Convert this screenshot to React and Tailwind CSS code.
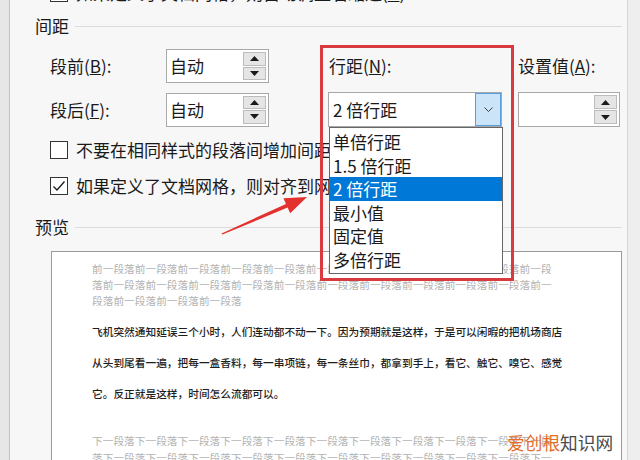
import React from 'react';

const grayTop = [
    '前一段落前一段落前一段落前一段落前一段落前一段落前一段落前一段落前一段落前一段落前一段',
    '落前一段落前一段落前一段落前一段落前一段落前一段落前一段落前一段落前一段落前一段落前一',
    '段落前一段落前一段落前一段落',
];

const body = [
    '飞机突然通知延误三个小时，人们连动都不动一下。因为预期就是这样，于是可以闲暇的把机场商店',
    '从头到尾看一遍，把每一盒香料，每一串项链，每一条丝巾，都拿到手上，看它、触它、嗅它、感觉',
    '它。反正就是这样，时间怎么流都可以。',
];

const grayBottom = [
    '下一段落下一段落下一段落下一段落下一段落下一段落下一段落下一段落下一段落下一段落下一段',
    '落下一段落下一段落下一段落下一段落下一段落下一段落下一段落下一段落下一段落下一段落下一',
];

const options = ['单倍行距', '1.5 倍行距', '2 倍行距', '最小值', '固定值', '多倍行距'];

const Triangle = ({ up }) => (
    <svg width="9" height="5" viewBox="0 0 9 5">
        <path d={up ? 'M0 5 L4.5 0 L9 5 Z' : 'M0 0 L4.5 5 L9 0 Z'} fill="#1a1a1a" />
    </svg>
);

const Spin = ({ value, className }) => (
    <div className={`flex items-stretch border border-[#a8a8a8] bg-white ${className}`}>
        <span className="flex-1 pl-[3px] text-[17px] leading-[32px]">{value}</span>
        <div className="my-[2px] mr-[2px] flex w-[23px] flex-col gap-[1px]">
            <div className="flex flex-1 items-center justify-center border border-[#bcbcbc] bg-[#e5e5e5]">
                <Triangle up />
            </div>
            <div className="flex flex-1 items-center justify-center border border-[#bcbcbc] bg-[#e5e5e5]">
                <Triangle />
            </div>
        </div>
    </div>
);

const Checkbox = ({ checked }) => (
    <div className="flex h-[18px] w-[18px] shrink-0 items-center justify-center border border-[#333] bg-white">
        {checked && (
            <svg width="14" height="12" viewBox="0 0 14 12">
                <path d="M1.5 6.5 L5 10 L12.5 1.5" fill="none" stroke="#1a1a1a" strokeWidth="1.3" />
            </svg>
        )}
    </div>
);

const Section = ({ title, className }) => (
    <div className={`flex h-[20px] items-center ${className}`}>
        <span className="text-[17px] leading-[20px]">{title}</span>
        <div className="ml-[6px] h-px flex-1 bg-[#dcdcdc]" />
    </div>
);

export default function App() {
    return (
        <div className="relative flex h-[460px] w-[640px] overflow-hidden bg-[#f7f7f7] font-['Noto_Sans_CJK_SC',sans-serif] text-[#1a1a1a]">
            {/* left window edge */}
            <div className="w-[10px] border-r border-[#c2c2c2] bg-[#e7e7e7]" />

            {/* dialog body */}
            <div className="flex flex-1 flex-col pl-[25px] pr-[5px]">
                {/* cut-off row at the top */}
                <div className="mt-[-17px] flex h-[20px] items-center gap-[8px] pl-[15px] whitespace-nowrap">
                    <Checkbox />
                    <span className="text-[17px]">如果定义了文档网格，则自动调整右缩进(<u>D</u>)</span>
                </div>

                <Section title="间距" className="mt-[13px]" />

                <div className="mt-[13px] flex h-[34px] items-center">
                    <span className="w-[131px] pl-[15px] text-[17px]">段前(<u>B</u>):</span>
                    <Spin value="自动" className="h-[34px] w-[103px]" />
                    <span className="ml-[60px] w-[189px] text-[17px]">行距(<u>N</u>):</span>
                    <span className="text-[17px]">设置值(<u>A</u>):</span>
                </div>

                <div className="mt-[9px] flex h-[35px] items-center">
                    <span className="w-[131px] pl-[15px] text-[17px]">段后(<u>F</u>):</span>
                    <Spin value="自动" className="h-[34px] w-[103px]" />
                    <div className="ml-[59px] flex h-[35px] w-[174px] border border-[#a8a8a8] bg-white">
                        <span className="flex-1 pl-[4px] text-[17px] leading-[33px]">2 倍行距</span>
                        <div className="flex w-[26px] items-center justify-center border border-[#5a9fe0] bg-[#cce4f7]">
                            <svg width="9" height="6" viewBox="0 0 9 6">
                                <path d="M0.5 0.5 L4.5 4.5 L8.5 0.5" fill="none" stroke="#404040" strokeWidth="1" />
                            </svg>
                        </div>
                    </div>
                    <Spin value="" className="ml-[16px] h-[35px] w-[102px]" />
                </div>

                <div className="mt-[14px] flex h-[18px] items-center gap-[8px] pl-[15px] whitespace-nowrap">
                    <Checkbox />
                    <span className="text-[17px]">不要在相同样式的段落间增加间距(<u>C</u>)</span>
                </div>

                <div className="mt-[17px] flex h-[19px] items-center gap-[8px] pl-[15px] whitespace-nowrap">
                    <Checkbox checked />
                    <span className="text-[17px]">如果定义了文档网格，则对齐到网格(<u>W</u>)</span>
                </div>

                <Section title="预览" className="mt-[22px]" />

                {/* preview */}
                <div className="ml-[16px] mt-[14px] flex-1 border border-[#9a9a9a] bg-white pl-[40px] pt-[9px] text-[10.7px] whitespace-nowrap">
                    {grayTop.map((line) => (
                        <div key={line} className="leading-[16px] text-[#b3b3b3]">{line}</div>
                    ))}
                    <div className="mt-[7px]">
                        {body.map((line) => (
                            <div key={line} className="font-medium leading-[31px] text-[#1e1e1e]">{line}</div>
                        ))}
                    </div>
                    <div className="mt-[23px]">
                        {grayBottom.map((line) => (
                            <div key={line} className="leading-[17px] text-[#b3b3b3]">{line}</div>
                        ))}
                    </div>
                </div>
            </div>

            {/* right window edge */}
            <div className="w-[13px] border-l border-[#d6d6d6] bg-[#eeeeee]" />

            {/* open dropdown list */}
            <div className="absolute left-[329px] top-[127px] w-[174px] border border-[#666] bg-white py-[2px]">
                {options.map((opt, i) => (
                    <div
                        key={opt}
                        className={`h-[23.5px] pl-[3px] text-[17px] leading-[23.5px] ${i === 2 ? 'bg-[#0078d7] text-white' : ''}`}
                    >
                        {opt}
                    </div>
                ))}
            </div>

            {/* annotation: red frame + arrow */}
            <div className="absolute left-[320px] top-[45px] h-[236px] w-[194px] border-[3px] border-[#d83a3e]" />
            <svg className="absolute left-0 top-0" width="640" height="460" viewBox="0 0 640 460">
                <polygon
                    points="221.6,233.4 286,204 283.4,198.3 307,197 290.2,213.3 287.6,207.6 222.4,234.6"
                    fill="#e3312d"
                />
            </svg>

            {/* watermark */}
            <div className="absolute left-[507px] top-[431px] text-[17.7px] leading-[22px]">
                <span className="text-[#e46e28]">爱创根</span>
                <span className="text-[#4a4a4a]">知识网</span>
            </div>
        </div>
    );
}
